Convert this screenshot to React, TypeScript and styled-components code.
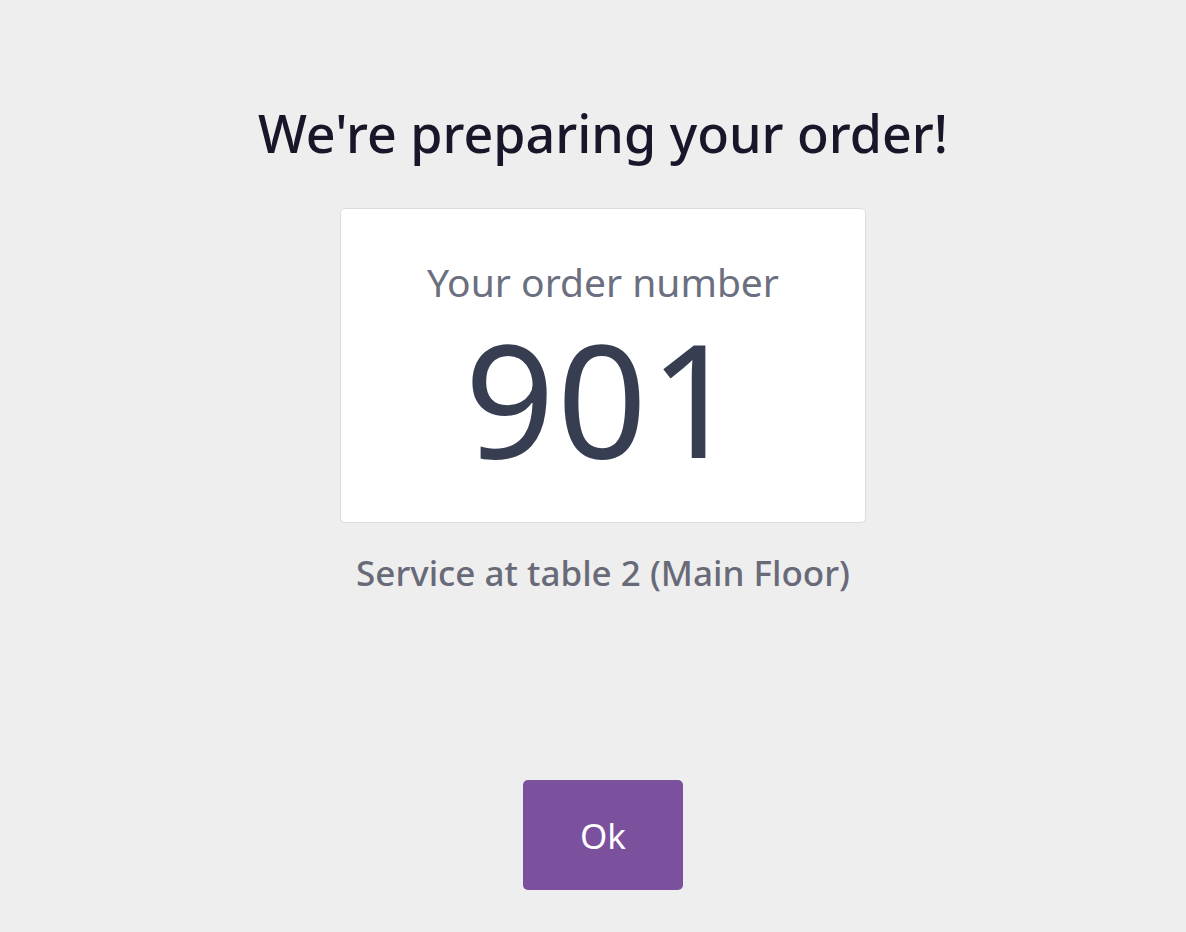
import styled, { createGlobalStyle } from "styled-components";

const GlobalStyle = createGlobalStyle`
  html, body {
    margin: 0;
    padding: 0;
    background: #eeeeee;
    font-family: "Noto Sans", "Open Sans", sans-serif;
  }
`;

const order = {
  number: 901,
  table: "2",
  floor: "Main Floor",
};

const App = () => {
  return (
    <>
      <GlobalStyle />
      <Screen>
        <Title>We're preparing your order!</Title>
        <NumberCard>
          <NumberLabel>Your order number</NumberLabel>
          <OrderNumber>{order.number}</OrderNumber>
        </NumberCard>
        <ServiceInfo>
          Service at table {order.table} ({order.floor})
        </ServiceInfo>
        <OkButton>Ok</OkButton>
      </Screen>
    </>
  );
};

export default App;

const Screen = styled.div`
  height: 932px;
  box-sizing: border-box;
  display: flex;
  flex-direction: column;
  align-items: center;
  padding-top: 101px;
  padding-bottom: 42px;
  padding-left: 20px;
`;
const Title = styled.h1`
  margin: 0;
  font-size: 52px;
  font-weight: 500;
  line-height: 64px;
  color: #171729;
`;
const NumberCard = styled.div`
  margin-top: 43px;
  width: 526px;
  height: 315px;
  box-sizing: border-box;
  background: #ffffff;
  border: 1px solid #dcdcdc;
  border-radius: 5px;
  display: flex;
  flex-direction: column;
  align-items: center;
  padding-top: 49px;
`;
const NumberLabel = styled.div`
  font-size: 39px;
  line-height: 48px;
  color: #6b6f80;
`;
const OrderNumber = styled.div`
  margin-top: 16px;
  font-size: 158px;
  line-height: 150px;
  letter-spacing: 2px;
  color: #373e52;
`;
const ServiceInfo = styled.div`
  margin-top: 28px;
  font-size: 35px;
  font-weight: 500;
  line-height: 44px;
  color: #686a78;
`;
const OkButton = styled.button`
  margin-top: auto;
  width: 160px;
  height: 110px;
  border: none;
  border-radius: 5px;
  background: #7b519d;
  color: #ffffff;
  font-family: inherit;
  font-size: 35px;
  cursor: pointer;
`;
